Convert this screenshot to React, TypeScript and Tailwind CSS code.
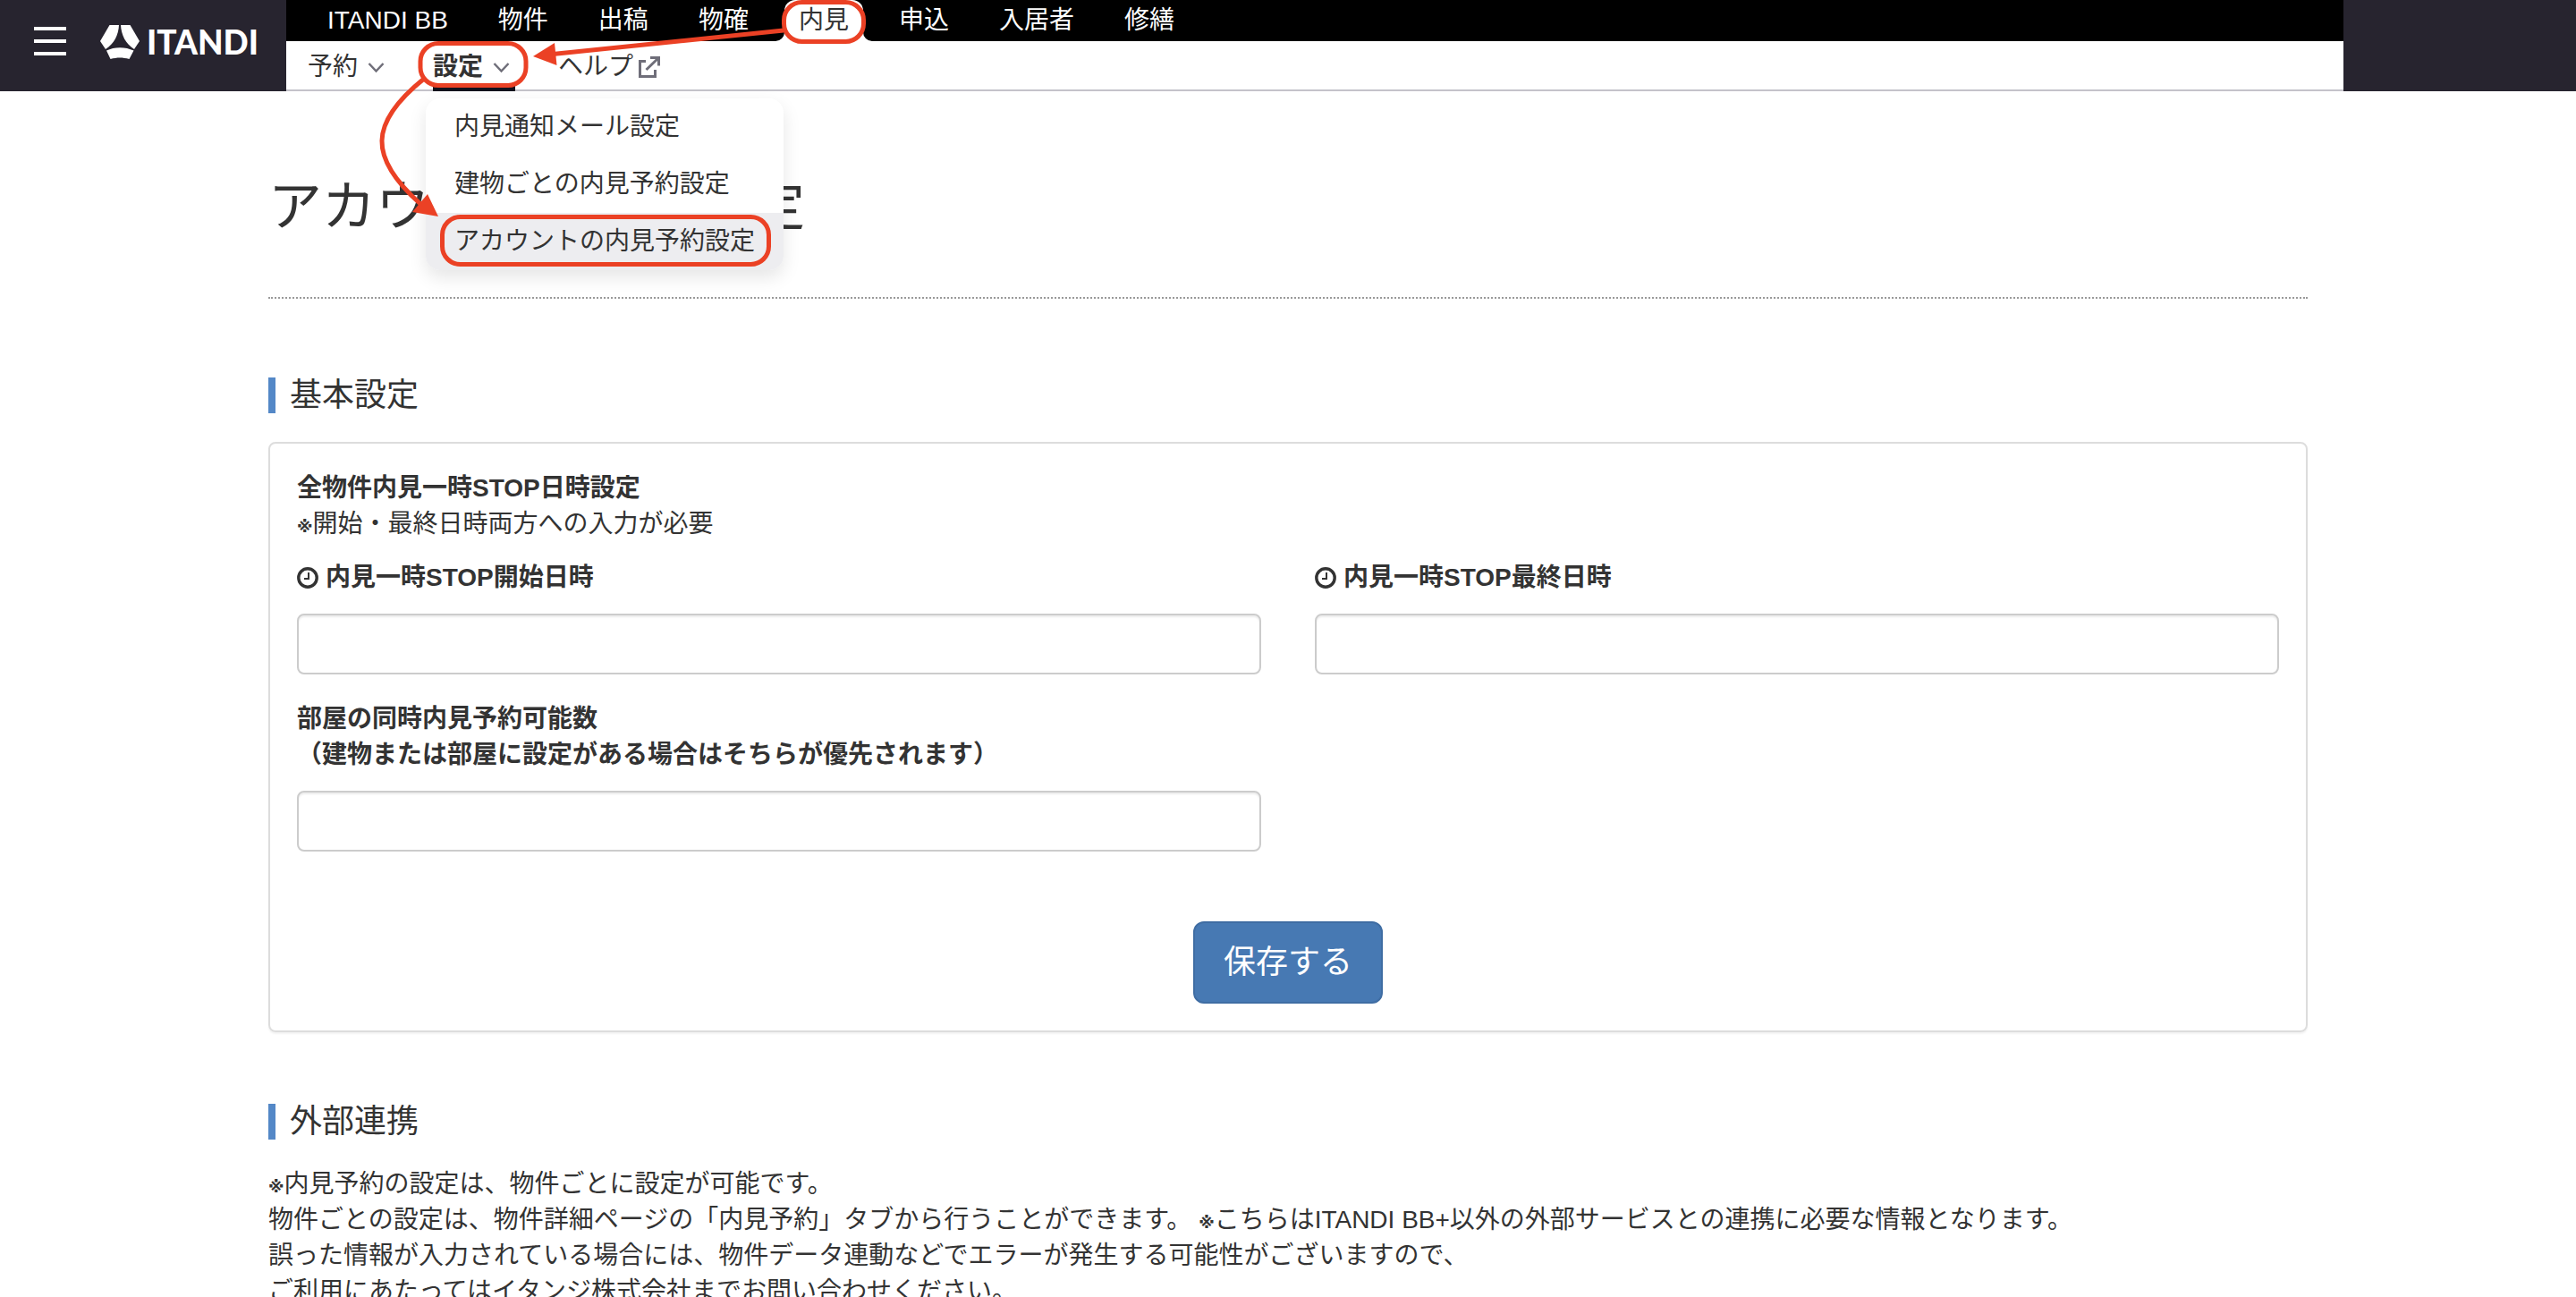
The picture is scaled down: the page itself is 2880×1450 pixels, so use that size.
import type { ReactNode } from 'react';

const tabs = ['ITANDI BB', '物件', '出稿', '物確', '内見', '申込', '入居者', '修繕'];

const settingsMenu = ['内見通知メール設定', '建物ごとの内見予約設定', 'アカウントの内見予約設定'];

function LogoMark() {
  return (
    <svg className="h-[38px] w-11" viewBox="0 0 44 38" fill="#fff" aria-hidden="true">
      <path d="M10.5 0H21C20.5 11 15.5 21 6 27L0 18z" />
      <path d="M23 0H33.5L44 18L38 27C28.5 21 23.5 11 23 0z" />
      <path d="M7 28.5C16 24 28 24 37.5 28.5L32.5 38C25 36 19 36 11.5 38z" />
    </svg>
  );
}

function Chevron() {
  return (
    <svg className="h-8 w-8" viewBox="0 0 32 32" fill="none" stroke="#6f6e79" strokeWidth="2.5" aria-hidden="true">
      <path d="M8.5 12L16.5 20.5L24.5 12" />
    </svg>
  );
}

function ExternalIcon() {
  return (
    <svg className="h-6 w-6" viewBox="0 0 24 24" fill="none" stroke="#6f6e79" strokeWidth="3" aria-hidden="true">
      <path d="M8 5.5H1.5V22.5H18.5V15" />
      <path d="M13 1.5H22.5V10.5M22.5 1.5L8.5 15" />
    </svg>
  );
}

function ClockIcon() {
  return (
    <svg className="h-6 w-6" viewBox="0 0 24 24" fill="none" stroke="#333" aria-hidden="true">
      <circle cx="12" cy="12" r="10.2" strokeWidth="3.4" />
      <path d="M13 6V13H8" strokeWidth="2" />
    </svg>
  );
}

function Flare({ side }: { side: 'left' | 'right' }) {
  return (
    <svg
      className={side === 'left' ? 'absolute bottom-0 right-full h-2.5 w-2.5' : 'absolute bottom-0 left-full h-2.5 w-2.5'}
      viewBox="0 0 10 10"
      fill="#fff"
      aria-hidden="true"
    >
      <path d={side === 'left' ? 'M10 0V10H0A10 10 0 0 0 10 0z' : 'M0 0V10H10A10 10 0 0 1 0 0z'} />
    </svg>
  );
}

function Note() {
  return <span className="font-['DejaVu_Sans',sans-serif] text-lg font-bold leading-none">※</span>;
}

function SectionTitle({ children }: { children: ReactNode }) {
  return <h2 className="border-l-8 border-[#5488c7] pl-4 text-4xl leading-10">{children}</h2>;
}

function Field({ id, children }: { id: string; children: ReactNode }) {
  return (
    <div className="flex flex-col gap-5">
      <label htmlFor={id} className="font-bold">
        {children}
      </label>
      <input
        id={id}
        type="text"
        className="h-[68px] w-full rounded-lg border-2 border-[#ccc] px-6 shadow-[inset_0_2px_2px_rgba(0,0,0,0.075)]"
      />
    </div>
  );
}

// Red rings and arrows that walk through 内見 → 設定 → アカウントの内見予約設定
function Guide() {
  return (
    <svg
      className="pointer-events-none absolute left-0 top-0 z-20 h-[320px] w-[1000px]"
      viewBox="0 0 1000 320"
      fill="none"
      stroke="#eb4125"
      strokeWidth="5"
      aria-hidden="true"
    >
      <rect x="876.5" y="2.5" width="89" height="44" rx="20" />
      <rect x="470" y="48.5" width="118" height="47" rx="20" />
      <rect x="494.5" y="242.5" width="365" height="53" rx="20" />
      <path d="M876 34L618 60.5" />
      <path d="M474 88C412 138 412 176 470 228" />
      <path d="M596 63L620 48L622.5 73z" fill="#eb4125" stroke="none" />
      <path d="M490 242L478 217L461 237z" fill="#eb4125" stroke="none" />
    </svg>
  );
}

export default function App() {
  return (
    <div className="relative h-screen overflow-hidden bg-white font-['Liberation_Sans','Noto_Sans_CJK_JP',sans-serif] text-[28px] leading-10 text-[#333]">
      <header className="flex h-[102px] bg-[#27242f]">
        <div className="flex w-80 shrink-0 items-start pl-[38px]">
          <button type="button" aria-label="メニュー" className="mt-[30px] flex w-9 flex-col gap-2.5">
            <span className="h-1 w-full bg-white" />
            <span className="h-1 w-full bg-white" />
            <span className="h-1 w-full bg-white" />
          </button>
          <a href="#" className="ml-[38px] mt-[27px] flex items-center gap-2 text-white">
            <LogoMark />
            <span className="font-['Lato',sans-serif] text-[37px] font-black leading-10">ITANDI</span>
          </a>
        </div>

        <div className="flex min-w-0 flex-1 flex-col">
          <nav className="flex h-[46px] gap-6 bg-black pl-[30px] text-white">
            {tabs.map((tab) =>
              tab === '内見' ? (
                <a key={tab} href="#" className="relative flex items-center rounded-t-xl bg-white px-4 text-[#333]">
                  <Flare side="left" />
                  {tab}
                  <Flare side="right" />
                </a>
              ) : (
                <a key={tab} href="#" className="flex items-center px-4">
                  {tab}
                </a>
              ),
            )}
          </nav>

          <nav className="flex h-14 gap-12 border-b-2 border-[#c4c3ca] bg-white pl-6">
            <button type="button" className="flex items-center gap-1 pt-1">
              予約
              <Chevron />
            </button>
            <div className="relative flex">
              <button type="button" className="-mb-0.5 flex items-center gap-1 border-b-[6px] border-[#12101c] pt-2 font-bold">
                設定
                <Chevron />
              </button>
              <ul className="absolute -left-2 top-16 z-10 w-[400px] overflow-hidden rounded-2xl bg-white shadow-[0_8px_20px_rgba(0,0,0,0.1)]">
                {settingsMenu.map((item, i) => (
                  <li key={item} className={i === 2 ? 'bg-[#ededf0]' : ''}>
                    <a href="#" className="block px-8 py-3">
                      {item}
                    </a>
                  </li>
                ))}
              </ul>
            </div>
            <a href="#" className="flex items-center gap-1.5 pt-1">
              ヘルプ
              <ExternalIcon />
            </a>
          </nav>
        </div>

        <div className="w-[260px] shrink-0" />
      </header>

      <main className="mx-auto max-w-[2280px]">
        <h1 className="border-b-2 border-dotted border-[#999] pb-[68px] pt-[98px] text-6xl leading-[64px]">
          アカウント別内見設定
        </h1>

        <section className="mt-[88px]">
          <SectionTitle>基本設定</SectionTitle>
          <form className="mt-8 rounded-lg border-2 border-[#ddd] p-[30px] shadow-[0_2px_2px_rgba(0,0,0,0.05)]">
            <p className="font-bold">全物件内見一時STOP日時設定</p>
            <p>
              <Note />
              開始・最終日時両方への入力が必要
            </p>
            <div className="mt-5 grid grid-cols-2 gap-x-[60px] gap-y-[30px]">
              <Field id="stop-start">
                <span className="flex items-center gap-2">
                  <ClockIcon />
                  内見一時STOP開始日時
                </span>
              </Field>
              <Field id="stop-end">
                <span className="flex items-center gap-2">
                  <ClockIcon />
                  内見一時STOP最終日時
                </span>
              </Field>
              <Field id="capacity">
                部屋の同時内見予約可能数
                <br />
                （建物または部屋に設定がある場合はそちらが優先されます）
              </Field>
            </div>
            <div className="mt-[78px] flex justify-center">
              <button
                type="button"
                className="h-[92px] rounded-xl border-2 border-[#3f6da3] bg-[#4779b3] px-8 text-4xl text-white"
              >
                保存する
              </button>
            </div>
          </form>
        </section>

        <section className="mt-20">
          <SectionTitle>外部連携</SectionTitle>
          <p className="mt-[30px]">
            <Note />
            内見予約の設定は、物件ごとに設定が可能です。
            <br />
            物件ごとの設定は、物件詳細ページの「内見予約」タブから行うことができます。 <Note />
            こちらはITANDI BB+以外の外部サービスとの連携に必要な情報となります。
            <br />
            誤った情報が入力されている場合には、物件データ連動などでエラーが発生する可能性がございますので、
            <br />
            ご利用にあたってはイタンジ株式会社までお問い合わせください。
          </p>
        </section>
      </main>

      <Guide />
    </div>
  );
}
